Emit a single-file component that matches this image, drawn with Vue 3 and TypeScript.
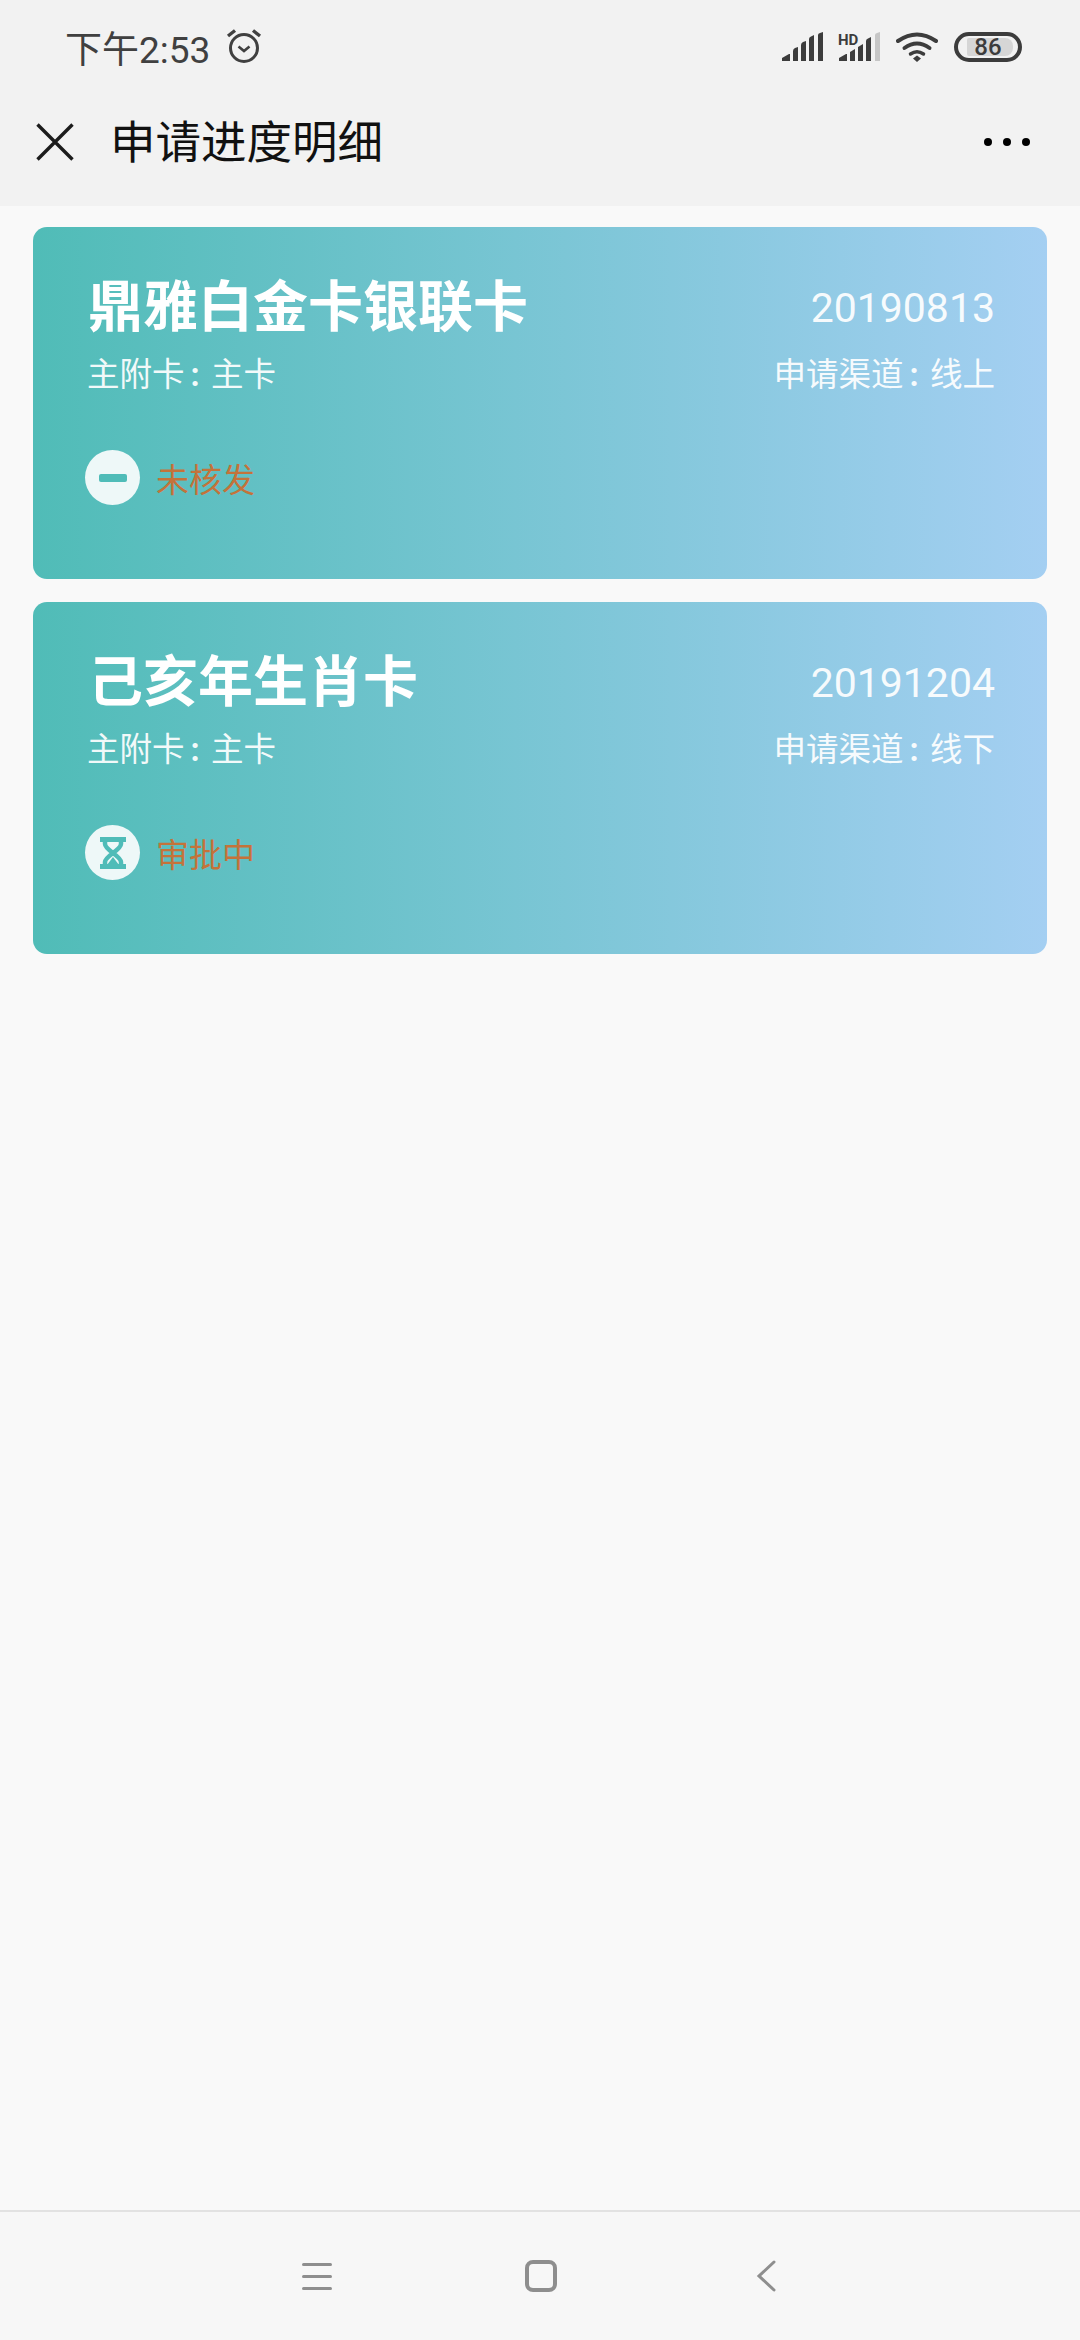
<template>
  <div class="page">
    <div class="top">
      <div class="status-bar">
        <span class="time">下午2:53</span>
        <svg class="alarm" width="36" height="36" viewBox="0 0 36 36" fill="none" stroke="#404040" stroke-width="3">
          <circle cx="18" cy="20" r="13.5" />
          <path d="M12.5 18.5 L18 23 L23.5 18.5" stroke-width="2.6" />
          <path d="M2 8 L9 2.5 M34 8 L27 2.5" stroke-width="3.4" />
        </svg>
        <div class="status-icons">
          <svg width="42" height="30" viewBox="0 0 42 30" fill="#3c3c3c">
            <path d="M0 29 L0 26 L7 22 L8 22 L8 29 Z" />
            <path d="M11 29 L11 19 Q11 17 13 16 L16 15 L16 29 Z" />
            <path d="M19 29 L19 13 Q19 11 21 10 L24 9 L24 29 Z" />
            <path d="M27 29 L27 7 Q27 5 29 4.5 L32 3 L32 29 Z" />
            <path d="M36 29 L36 3 Q36 1.5 38 1 L41 0 L41 29 Z" />
          </svg>
          <svg class="hd-signal" width="42" height="30" viewBox="0 0 42 30" fill="#3c3c3c">
            <text x="-1" y="13" class="hd">HD</text>
            <path d="M0 29 L0 26 L7 22 L8 22 L8 29 Z" />
            <path d="M11 29 L11 20 L16 17 L16 29 Z" />
            <path d="M19 29 L19 15 L24 12 L24 29 Z" />
            <path d="M27 29 L27 9 Q27 7 29 6.5 L32 5 L32 29 Z" />
            <path d="M36 29 L36 3 Q36 1.5 38 1 L41 0 L41 29 Z" fill="#c6c6c6" />
          </svg>
          <svg width="42" height="30" viewBox="0 0 42 30" fill="none" stroke="#3c3c3c" stroke-width="4" stroke-linecap="round">
            <path d="M2 9 Q21 -4 40 9" />
            <path d="M8.5 16 Q21 7 33.5 16" />
            <path d="M14.5 22 Q21 17.5 27.5 22" stroke-width="3.5" />
            <path d="M21 23.5 L25 26.5 L21 30 L17 26.5 Z" fill="#3c3c3c" stroke="none" />
          </svg>
          <div class="battery">
            <div class="battery-fill"></div>
            <span class="battery-text">86</span>
          </div>
        </div>
      </div>
      <div class="header">
        <svg class="close" width="38" height="38" viewBox="0 0 38 38" stroke="#1c1c1c" stroke-width="3.4" fill="none">
          <path d="M1.5 1.5 L36.5 36.5 M36.5 1.5 L1.5 36.5" />
        </svg>
        <span class="header-title">申请进度明细</span>
        <div class="more">
          <i></i><i></i><i></i>
        </div>
      </div>
    </div>

    <div class="list">
      <div v-for="card in cards" :key="card.date" class="card">
        <div class="row">
          <span class="name">{{ card.name }}</span>
          <span class="date">{{ card.date }}</span>
        </div>
        <div class="row sub">
          <span>主附卡<b>:</b> 主卡</span>
          <span>申请渠道<b>:</b> {{ card.channel }}</span>
        </div>
        <div class="state">
          <div class="state-icon">
            <div v-if="card.icon === 'minus'" class="minus"></div>
            <svg v-else width="26" height="32" viewBox="0 0 26 32">
              <path d="M0 0 H26 V5 H0 Z M0 27 H26 V32 H0 Z M7 28 L13 20 L19 28 Z" fill="#4fbcb8" />
              <path d="M5 4 V7 Q5 10 13 16 Q21 10 21 7 V4 M5 28 V25 Q5 22 13 16 Q21 22 21 25 V28" fill="none" stroke="#4fbcb8" stroke-width="4.5" />
            </svg>
          </div>
          <span class="state-text">{{ card.state }}</span>
        </div>
      </div>
    </div>

    <div class="nav">
      <div class="nav-menu"><i></i><i></i><i></i></div>
      <div class="nav-home"></div>
      <svg width="20" height="32" viewBox="0 0 20 32" fill="none" stroke="#8e8e8e" stroke-width="3" stroke-linecap="round">
        <path d="M18 2 L3 16 L18 30" />
      </svg>
    </div>
  </div>
</template>

<script setup lang="ts">
interface Card {
  name: string;
  date: string;
  channel: string;
  state: string;
  icon: "minus" | "hourglass";
}

const cards: Card[] = [
  { name: "鼎雅白金卡银联卡", date: "20190813", channel: "线上", state: "未核发", icon: "minus" },
  { name: "己亥年生肖卡", date: "20191204", channel: "线下", state: "审批中", icon: "hourglass" },
];
</script>

<style>
body {
  margin: 0;
  background: #f9f9f9;
}
</style>

<style scoped>
.page {
  width: 1080px;
  height: 2340px;
  display: flex;
  flex-direction: column;
  background: #f9f9f9;
  font-family: "Noto Sans CJK SC", Roboto, sans-serif;
}

.top {
  height: 206px;
  background: #f2f2f2;
  flex-shrink: 0;
}

.status-bar {
  height: 90px;
  display: flex;
  align-items: center;
  padding: 4px 58px 0 65px;
  box-sizing: border-box;
}

.time {
  font-family: Roboto, "Noto Sans CJK SC", sans-serif;
  font-size: 37px;
  color: #404040;
}

.alarm {
  margin-left: 16px;
  margin-top: -2px;
}

.status-icons {
  margin-left: auto;
  display: flex;
  align-items: center;
  gap: 15px;
  margin-top: -1px;
}

.hd-signal {
  overflow: visible;
}

.hd {
  font-family: Roboto, sans-serif;
  font-size: 15px;
  font-weight: 700;
}

.battery {
  position: relative;
  width: 68px;
  height: 30px;
  box-sizing: border-box;
  border: 4px solid #3c3c3c;
  border-radius: 15px;
  margin-left: 1px;
}

.battery-fill {
  position: absolute;
  left: 9px;
  top: 2px;
  bottom: 2px;
  width: 46px;
  background: #d6d6d6;
  border-radius: 2px 8px 8px 2px;
}

.battery-text {
  position: absolute;
  inset: 0;
  text-align: center;
  font-family: Roboto, sans-serif;
  font-size: 24px;
  font-weight: 500;
  line-height: 22px;
  color: #3c3c3c;
}

.header {
  height: 116px;
  display: flex;
  align-items: center;
  padding: 0 50px 18px 36px;
  box-sizing: border-box;
}

.close {
  margin-top: 6px;
}

.header-title {
  margin-left: 36px;
  font-size: 45.5px;
  font-weight: 400;
  color: #111;
}

.more {
  margin-left: auto;
  margin-top: 6px;
  display: flex;
  gap: 11px;
}

.more i {
  width: 8px;
  height: 8px;
  border-radius: 50%;
  background: #000;
}

.list {
  flex: 1;
  padding: 21px 33px 0;
  display: flex;
  flex-direction: column;
  gap: 23px;
}

.card {
  height: 352px;
  box-sizing: border-box;
  padding: 38px 52px 0 54px;
  border-radius: 14px;
  background: linear-gradient(90deg, #50bcb7 0%, #a4cff2 100%);
  color: #fff;
}

.row {
  display: flex;
  justify-content: space-between;
  align-items: center;
}

.name {
  font-size: 55px;
  font-weight: 700;
  line-height: 74px;
  margin-left: 1px;
}

.date {
  font-family: Roboto, sans-serif;
  font-size: 41px;
  opacity: 0.92;
  padding-top: 12px;
}

.sub {
  font-size: 32.5px;
  line-height: 44px;
  margin-top: 11px;
  opacity: 0.92;
}

.sub b {
  font-family: Roboto, sans-serif;
  font-weight: 700;
  margin: 0 4px 0 6px;
}

.state {
  display: flex;
  align-items: center;
  margin-top: 29px;
  margin-left: -2px;
  padding-top: 24px;
}

.state-icon {
  width: 55px;
  height: 55px;
  border-radius: 50%;
  background: #eef8f8;
  display: flex;
  align-items: center;
  justify-content: center;
}

.minus {
  width: 28px;
  height: 8px;
  border-radius: 2px;
  background: #4fbcb8;
}

.state-text {
  margin-left: 16px;
  font-size: 33px;
  color: #c4733a;
}

.nav {
  height: 130px;
  flex-shrink: 0;
  box-sizing: border-box;
  border-top: 2px solid #e2e2e2;
  background: #f7f7f7;
  display: flex;
  align-items: center;
  padding: 0 304px 0 302px;
  justify-content: space-between;
}

.nav-menu {
  width: 30px;
  display: flex;
  flex-direction: column;
  gap: 9px;
}

.nav-menu i {
  height: 3px;
  border-radius: 2px;
  background: #8e8e8e;
}

.nav-home {
  width: 32px;
  height: 32px;
  box-sizing: border-box;
  border: 4px solid #8e8e8e;
  border-radius: 8px;
  margin-left: -6px;
}
</style>
